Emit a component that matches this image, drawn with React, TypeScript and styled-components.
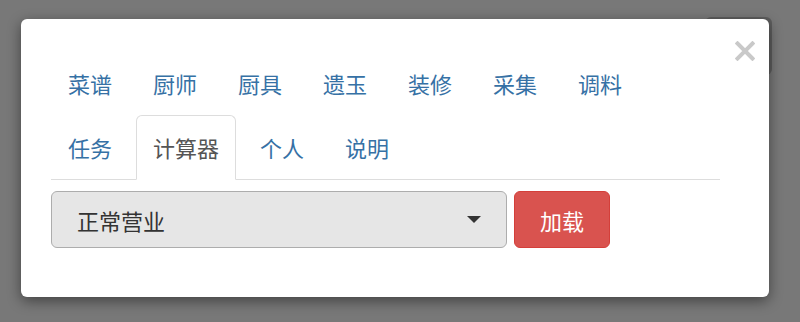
import styled, { createGlobalStyle } from "styled-components";

const GlobalStyle = createGlobalStyle`
  html, body {
    margin: 0;
    padding: 0;
    background: #787878;
  }
  * {
    box-sizing: border-box;
  }
`;

const Page = styled.div`
  position: relative;
  width: 800px;
  height: 322px;
  overflow: hidden;
  display: flex;
  justify-content: flex-end;
  align-items: flex-start;
  padding: 17px 28px 0 0;
  font-family: "Noto Sans CJK SC", "Noto Sans", sans-serif;
`;

const PageButton = styled.div`
  width: 67px;
  height: 58px;
  border-radius: 6px;
  background: #5e5e5e;
`;

const Modal = styled.div`
  position: absolute;
  left: 21px;
  top: 19px;
  width: 748px;
  height: 278px;
  padding: 32px 0 0 30px;
  background: #fff;
  border-radius: 6px;
  box-shadow: 0 4px 14px rgba(0, 0, 0, 0.45);
`;

const CloseButton = styled.button`
  position: absolute;
  top: 21px;
  right: 13px;
  width: 22px;
  height: 22px;
  padding: 0;
  border: 0;
  background: transparent;
  display: flex;
  align-items: center;
  justify-content: center;
  cursor: pointer;
`;

const Tabs = styled.ul`
  list-style: none;
  margin: 0;
  padding: 0;
  width: 669px;
  display: flex;
  flex-wrap: wrap;
  border-bottom: 1px solid #ddd;
`;

const Tab = styled.li<{ $active?: boolean }>`
  margin: 0 7px -1px 0;
  padding: 16px;
  font-size: 22px;
  line-height: 31px;
  color: ${(p) => (p.$active ? "#555" : "#3671a5")};
  background: ${(p) => (p.$active ? "#fff" : "transparent")};
  border: 1px solid ${(p) => (p.$active ? "#ddd" : "transparent")};
  border-bottom-color: transparent;
  border-radius: 6px 6px 0 0;
  cursor: pointer;
`;

const FormRow = styled.div`
  display: flex;
  gap: 7px;
  margin-top: 11px;
`;

const SelectBox = styled.div`
  width: 456px;
  height: 57px;
  display: flex;
  align-items: center;
  justify-content: space-between;
  padding: 0 25px;
  background: #e6e6e6;
  border: 1px solid #adadad;
  border-radius: 6px;
  font-size: 22px;
  color: #333;
`;

const LoadButton = styled.button`
  width: 96px;
  height: 57px;
  background: #d9534f;
  border: 1px solid #d43f3a;
  border-radius: 6px;
  color: #fff;
  font-family: inherit;
  font-size: 22px;
  padding: 0;
  cursor: pointer;
`;

const tabNames = ["菜谱", "厨师", "厨具", "遗玉", "装修", "采集", "调料", "任务", "计算器", "个人", "说明"];

export default function App() {
  return (
    <Page>
      <GlobalStyle />
      <PageButton />
      <Modal>
        <CloseButton aria-label="关闭">
          <svg width="20" height="20" viewBox="0 0 20 20">
            <path d="M2.5 2.5 L17.5 17.5 M17.5 2.5 L2.5 17.5" stroke="#c9c9c9" strokeWidth="4" strokeLinecap="square" />
          </svg>
        </CloseButton>
        <Tabs>
          {tabNames.map((name) => (
            <Tab key={name} $active={name === "计算器"}>
              {name}
            </Tab>
          ))}
        </Tabs>
        <FormRow>
          <SelectBox>
            <span>正常营业</span>
            <svg width="14" height="7" viewBox="0 0 14 7">
              <path d="M0 0 H14 L7 7 Z" fill="#333" />
            </svg>
          </SelectBox>
          <LoadButton>加载</LoadButton>
        </FormRow>
      </Modal>
    </Page>
  );
}
